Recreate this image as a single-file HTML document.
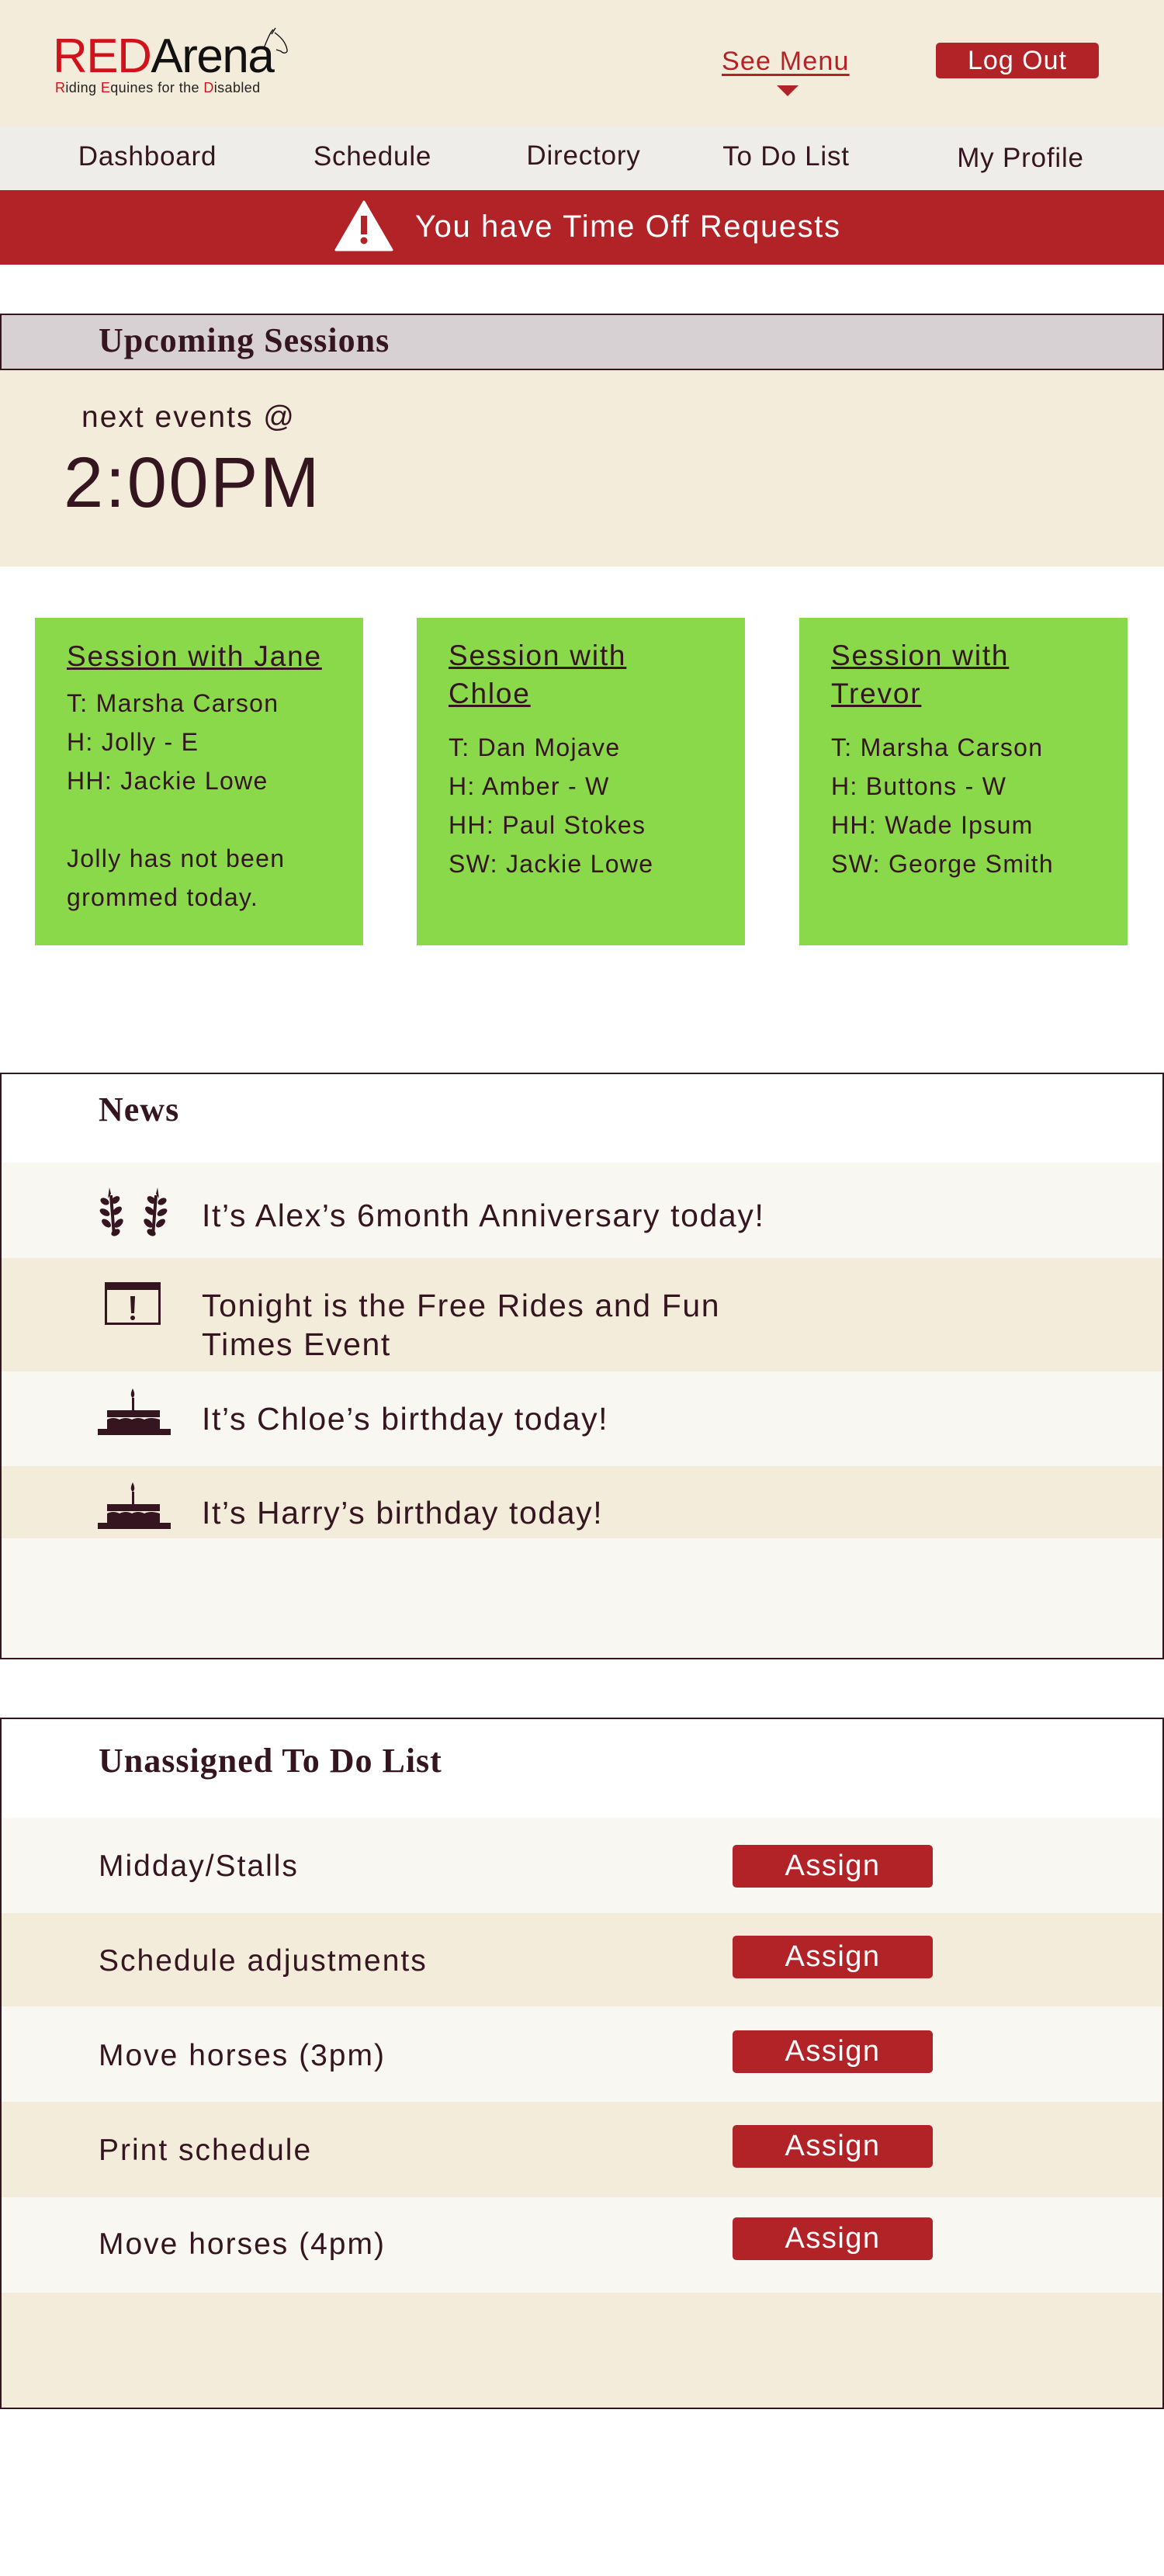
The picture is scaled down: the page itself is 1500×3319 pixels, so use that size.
<!DOCTYPE html>
<html><head><meta charset="utf-8">
<style>
*{margin:0;padding:0;box-sizing:border-box}
body{width:1500px;height:3319px;background:#fff;position:relative;font-family:"Liberation Sans",sans-serif;color:#341520;overflow:hidden}
.a{position:absolute;white-space:nowrap}
.h{font-family:"Liberation Serif",serif;font-weight:bold;font-size:44px;letter-spacing:1px;color:#341520}
.nav{font-size:35px;letter-spacing:.8px;color:#341520;transform:translateX(-50%)}
.card{position:absolute;background:#8ad94a;width:423px;height:422px;top:796px}
.card div{position:absolute;left:41px;font-size:32px;letter-spacing:1.3px;line-height:50px;white-space:nowrap}
.card u{font-size:37px;letter-spacing:1.8px}
.row{position:absolute;left:2px;width:1496px}
.nt{position:absolute;left:260px;font-size:41px;letter-spacing:1.6px;line-height:50px;white-space:nowrap}
.tt{position:absolute;left:127px;font-size:39px;letter-spacing:2px;white-space:nowrap}
.btn{position:absolute;left:944px;width:258px;height:55px;background:#b22328;border-radius:5px;color:#fff;font-size:38px;text-align:center;line-height:55px;letter-spacing:1.5px}
</style></head><body>
<!-- header -->
<div class="a" style="left:0;top:0;width:1500px;height:162px;background:#f3ecdb"></div>
<div class="a" style="left:68px;top:40px;font-size:62px;letter-spacing:-1.5px;line-height:66px"><span style="color:#d0121b">RED</span><span style="color:#111">Arena</span></div>
<div class="a" style="left:71px;top:103px;font-size:18px;color:#222;letter-spacing:.4px"><span style="color:#d0121b">R</span>iding <span style="color:#d0121b">E</span>quines for the <span style="color:#d0121b">D</span>isabled</div>
<svg class="a" style="left:330px;top:34px" width="58" height="50" viewBox="0 0 58 50"><path d="M10 28 C14 18 18 8 22 4 M20 10 L25 2 M24 8 C32 14 38 20 40 30 C41 34 36 36 32 32 L26 30" fill="none" stroke="#111" stroke-width="1.4"/></svg>
<div class="a" style="left:930px;top:60px;font-size:34px;letter-spacing:1.2px;color:#b22328;text-decoration:underline;text-underline-offset:5px">See Menu</div>
<div class="a" style="left:1001px;top:110px;width:0;height:0;border-left:14px solid transparent;border-right:14px solid transparent;border-top:14px solid #b22328"></div>
<div class="a" style="left:1206px;top:55px;width:210px;height:46px;background:#b22328;border-radius:5px;color:#fff;font-size:34px;letter-spacing:1px;text-align:center;line-height:46px">Log Out</div>
<!-- nav -->
<div class="a" style="left:0;top:162px;width:1500px;height:83px;background:#efede9"></div>
<div class="a nav" style="left:190px;top:182px">Dashboard</div>
<div class="a nav" style="left:480px;top:182px">Schedule</div>
<div class="a nav" style="left:752px;top:181px">Directory</div>
<div class="a nav" style="left:1013px;top:182px">To Do List</div>
<div class="a nav" style="left:1315px;top:184px">My Profile</div>
<!-- banner -->
<div class="a" style="left:0;top:245px;width:1500px;height:96px;background:#b22328"></div>
<svg class="a" style="left:431px;top:258px" width="76" height="66" viewBox="0 0 76 66"><path d="M38 2 L74 64 L2 64 Z" fill="#fff" stroke="#fff" stroke-width="3" stroke-linejoin="round"/><rect x="34" y="20" width="8" height="24" fill="#b22328"/><circle cx="38" cy="52" r="4.5" fill="#b22328"/></svg>
<div class="a" style="left:535px;top:270px;font-size:40px;color:#fff;letter-spacing:1.6px">You have Time Off Requests</div>
<!-- upcoming -->
<div class="a" style="left:0;top:404px;width:1500px;height:73px;background:#d8d1d4;border:2px solid #341520"></div>
<div class="a h" style="left:127px;top:413px">Upcoming Sessions</div>
<div class="a" style="left:0;top:477px;width:1500px;height:253px;background:#f3ecdb"></div>
<div class="a" style="left:105px;top:516px;font-size:39px;letter-spacing:2px">next events @</div>
<div class="a" style="left:82px;top:570px;font-size:92px;letter-spacing:2.5px">2:00PM</div>
<!-- cards -->
<div class="card" style="left:45px"><div style="top:25px"><u>Session with Jane</u></div><div style="top:85px">T: Marsha Carson<br>H: Jolly - E<br>HH: Jackie Lowe<br><br>Jolly has not been<br>grommed today.</div></div>
<div class="card" style="left:537px"><div style="top:25px;line-height:48px"><u>Session with<br>Chloe</u></div><div style="top:142px">T: Dan Mojave<br>H: Amber - W<br>HH: Paul Stokes<br>SW: Jackie Lowe</div></div>
<div class="card" style="left:1030px"><div style="top:25px;line-height:48px"><u>Session with<br>Trevor</u></div><div style="top:142px">T: Marsha Carson<br>H: Buttons - W<br>HH: Wade Ipsum<br>SW: George Smith</div></div>
<!-- news -->
<div class="a" style="left:0;top:1382px;width:1500px;height:756px;border:2px solid #341520;background:#f9f7f1"></div>
<div class="a" style="left:2px;top:1384px;width:1496px;height:114px;background:#fff"></div>
<div class="a h" style="left:127px;top:1404px">News</div>
<div class="row" style="top:1498px;height:123px;background:#f9f7f1"></div>
<div class="row" style="top:1621px;height:146px;background:#f3ecdb"></div>
<div class="row" style="top:1767px;height:122px;background:#f9f7f1"></div>
<div class="row" style="top:1889px;height:93px;background:#f3ecdb"></div>
<svg class="a" style="left:127px;top:1530px" width="90" height="66" viewBox="0 0 90 66"><g fill="#341520"><path d="M14 0 L16 8 L12 14 Z"/><ellipse cx="8" cy="18" rx="6" ry="4" transform="rotate(30 8 18)"/><ellipse cx="22" cy="16" rx="6" ry="4" transform="rotate(-40 22 16)"/><ellipse cx="8" cy="32" rx="7" ry="4" transform="rotate(30 8 32)"/><ellipse cx="24" cy="30" rx="7" ry="4" transform="rotate(-40 24 30)"/><ellipse cx="10" cy="46" rx="7" ry="4" transform="rotate(40 10 46)"/><ellipse cx="26" cy="46" rx="7" ry="4" transform="rotate(-45 26 46)"/><path d="M14 10 L18 62 L22 62 L18 10 Z"/><ellipse cx="22" cy="58" rx="6" ry="4" transform="rotate(-30 22 58)"/></g><g fill="#341520" transform="translate(90 0) scale(-1 1)"><path d="M14 0 L16 8 L12 14 Z"/><ellipse cx="8" cy="18" rx="6" ry="4" transform="rotate(30 8 18)"/><ellipse cx="22" cy="16" rx="6" ry="4" transform="rotate(-40 22 16)"/><ellipse cx="8" cy="32" rx="7" ry="4" transform="rotate(30 8 32)"/><ellipse cx="24" cy="30" rx="7" ry="4" transform="rotate(-40 24 30)"/><ellipse cx="10" cy="46" rx="7" ry="4" transform="rotate(40 10 46)"/><ellipse cx="26" cy="46" rx="7" ry="4" transform="rotate(-45 26 46)"/><path d="M14 10 L18 62 L22 62 L18 10 Z"/><ellipse cx="22" cy="58" rx="6" ry="4" transform="rotate(-30 22 58)"/></g></svg>
<div class="nt" style="top:1541px">It’s Alex’s 6month Anniversary today!</div>
<svg class="a" style="left:135px;top:1652px" width="72" height="55" viewBox="0 0 72 55"><rect x="1.5" y="1.5" width="69" height="52" fill="none" stroke="#341520" stroke-width="3"/><rect x="0" y="0" width="72" height="10" fill="#341520"/><path d="M33 18 L39 18 L38 40 L34 40 Z" fill="#341520"/><circle cx="36" cy="46" r="3" fill="#341520"/></svg>
<div class="nt" style="top:1657px">Tonight is the Free Rides and Fun<br>Times Event</div>
<svg class="a" style="left:126px;top:1789px" width="94" height="60" viewBox="0 0 94 60"><g fill="#341520"><path d="M45 0 C42 6 42 10 45 12 C48 10 48 6 45 0 Z"/><rect x="44" y="12" width="3" height="16"/><rect x="12" y="28" width="68" height="9"/><path d="M12 40 Q20 36 28 40 Q36 36 44 40 Q52 36 60 40 Q68 36 80 40 L80 52 L12 52 Z"/><rect x="0" y="52" width="94" height="8"/></g></svg>
<div class="nt" style="top:1803px">It’s Chloe’s birthday today!</div>
<svg class="a" style="left:126px;top:1910px" width="94" height="60" viewBox="0 0 94 60"><g fill="#341520"><path d="M45 0 C42 6 42 10 45 12 C48 10 48 6 45 0 Z"/><rect x="44" y="12" width="3" height="16"/><rect x="12" y="28" width="68" height="9"/><path d="M12 40 Q20 36 28 40 Q36 36 44 40 Q52 36 60 40 Q68 36 80 40 L80 52 L12 52 Z"/><rect x="0" y="52" width="94" height="8"/></g></svg>
<div class="nt" style="top:1924px">It’s Harry’s birthday today!</div>
<!-- todo -->
<div class="a" style="left:0;top:2213px;width:1500px;height:891px;border:2px solid #341520;background:#f3ecdb"></div>
<div class="a" style="left:2px;top:2215px;width:1496px;height:127px;background:#fff"></div>
<div class="a h" style="left:127px;top:2243px">Unassigned To Do List</div>
<div class="row" style="top:2342px;height:123px;background:#f9f7f1"></div>
<div class="row" style="top:2465px;height:120px;background:#f3ecdb"></div>
<div class="row" style="top:2585px;height:123px;background:#f9f7f1"></div>
<div class="row" style="top:2708px;height:123px;background:#f3ecdb"></div>
<div class="row" style="top:2831px;height:123px;background:#f9f7f1"></div>
<div class="tt" style="top:2383px">Midday/Stalls</div><div class="btn" style="top:2377px">Assign</div>
<div class="tt" style="top:2505px">Schedule adjustments</div><div class="btn" style="top:2494px">Assign</div>
<div class="tt" style="top:2627px">Move horses (3pm)</div><div class="btn" style="top:2616px">Assign</div>
<div class="tt" style="top:2749px">Print schedule</div><div class="btn" style="top:2738px">Assign</div>
<div class="tt" style="top:2870px">Move horses (4pm)</div><div class="btn" style="top:2857px">Assign</div>
</body></html>
